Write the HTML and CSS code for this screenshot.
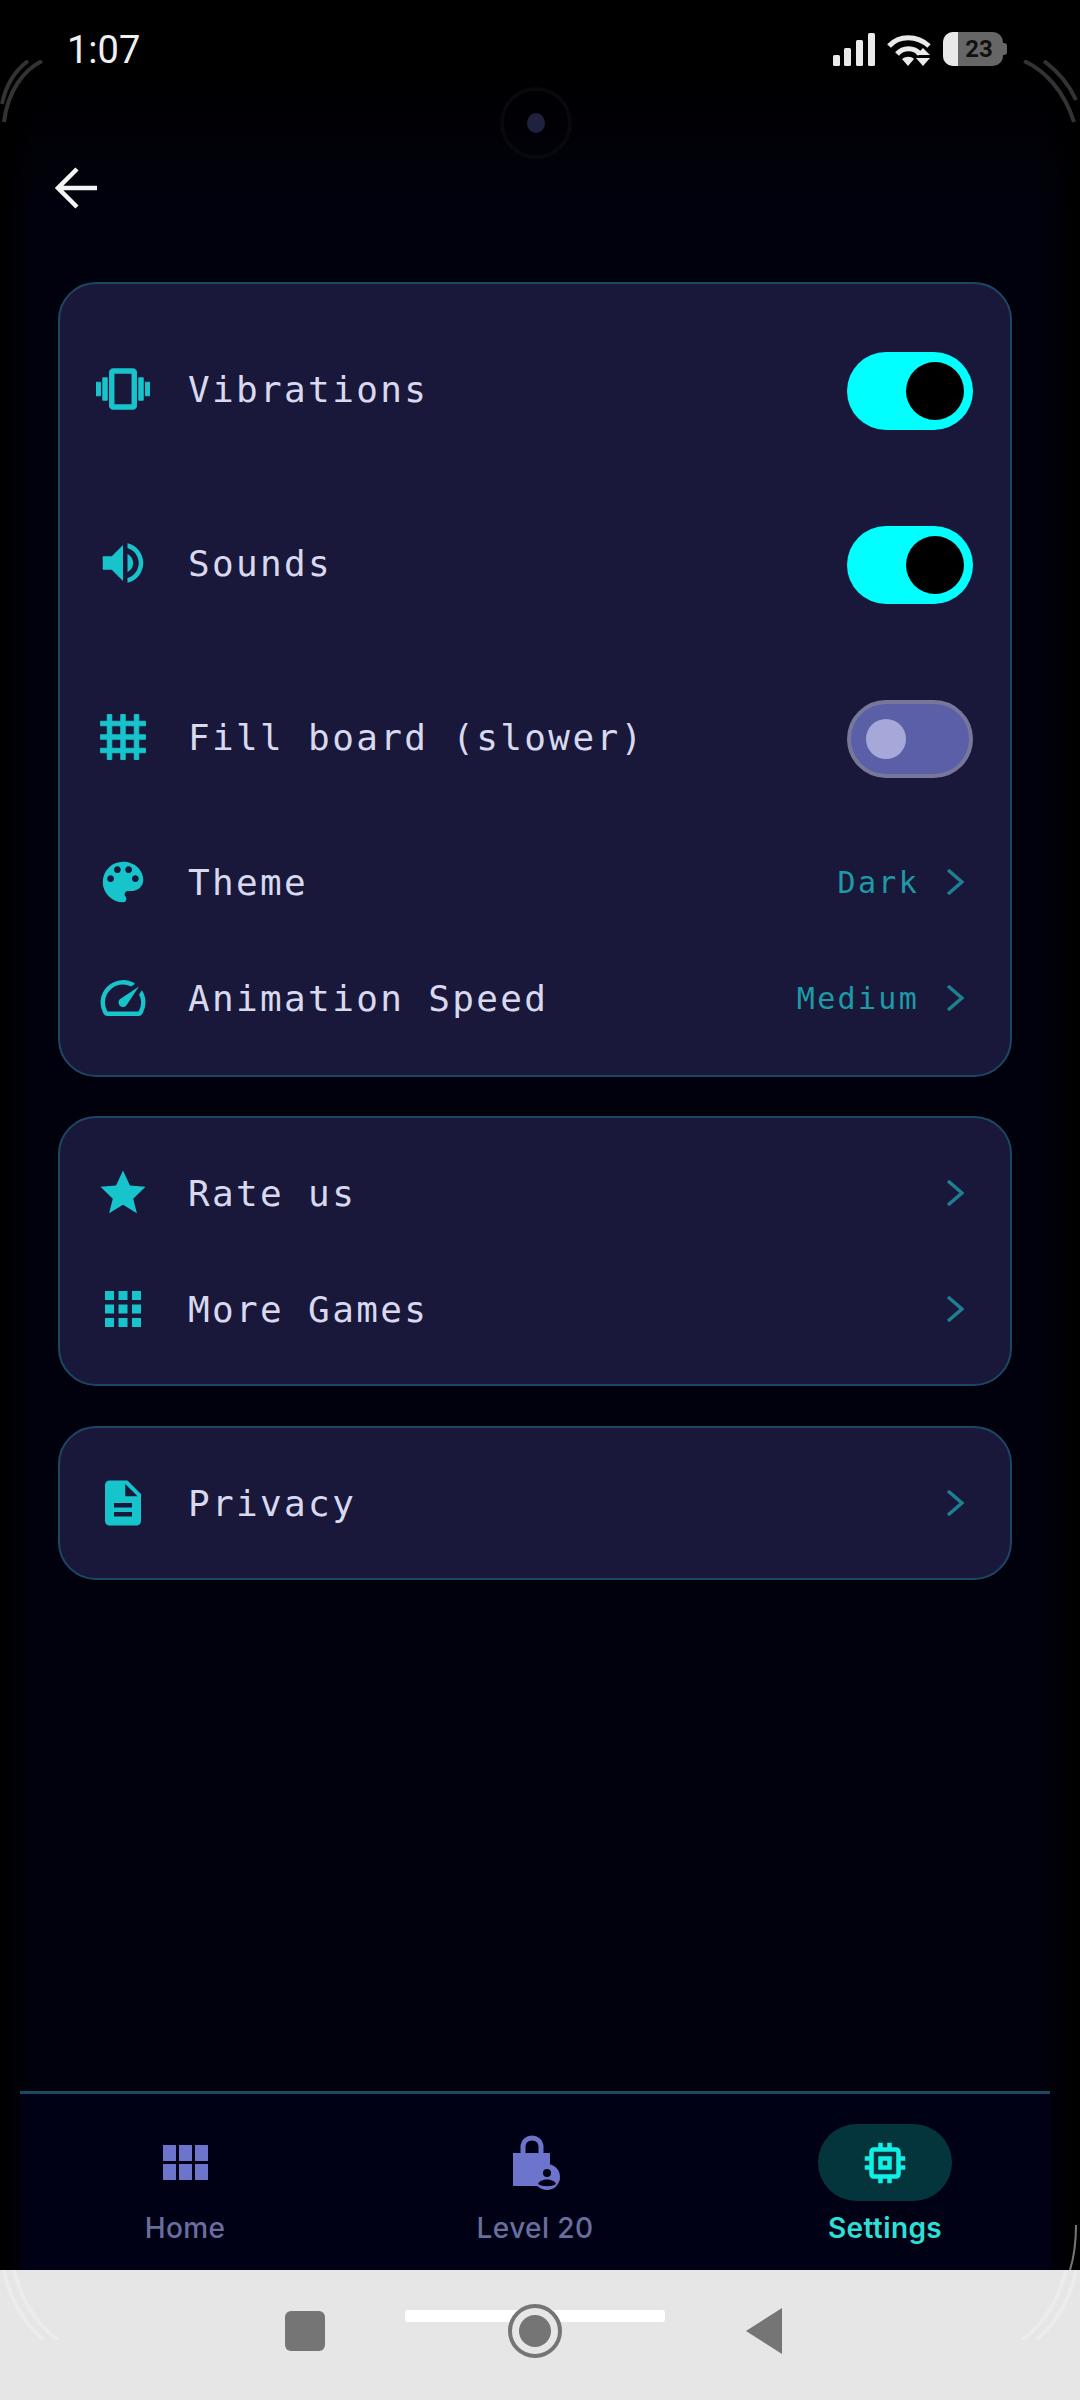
FILE: index.html
```html
<!doctype html>
<html lang="en">
<head>
    <meta charset="utf-8">
    <meta name="viewport" content="width=device-width, initial-scale=1">
    <title>Settings</title>
    <link rel="stylesheet" href="styles.css">
</head>
<body>
<div class="screen">
    <div class="status-bar">
        <span class="time">1:07</span>
        <div class="status-icons">
            <svg class="signal" viewBox="0 0 42 33"><rect x="0" y="22" width="7" height="11" rx="1.5"/><rect x="11" y="15" width="7" height="18" rx="1.5"/><rect x="23" y="7" width="7" height="26" rx="1.5"/><rect x="35" y="0" width="7" height="33" rx="1.5"/></svg>
            <svg class="wifi" viewBox="0 0 44 33">
                <path class="wifi-arc" d="M2 13 C12 2 30 2 42 13"/>
                <path class="wifi-arc" d="M10 21 C16 14 27 14 33 21"/>
                <path d="M15 26 C19 23 24 23 27 26 L21 33 Z"/>
                <path d="M36 15 L43 22 H29 Z M29 25 H43 L36 33 Z"/>
            </svg>
            <div class="battery"><span class="battery-fill"></span><span class="battery-num">23</span></div>
        </div>
    </div>

    <div class="header">
        <svg class="back" viewBox="0 0 44 42"><path d="M42 21 H4 M22 2 L3 21 L22 40"/></svg>
    </div>

    <div class="cards">
        <div class="card">
            <div class="row row-tall">
                <svg class="icon icon-heavy" viewBox="0 0 24 24"><path d="M0 15h2V9H0v6zm3 2h2V7H3v10zm19-8v6h2V9h-2zm-3 8h2V7h-2v10zM16.5 3h-9C6.67 3 6 3.67 6 4.5v15c0 .83.67 1.5 1.5 1.5h9c.83 0 1.5-.67 1.5-1.5v-15c0-.83-.67-1.5-1.5-1.5zM16 19H8V5h8v14z"/></svg>
                <span class="label">Vibrations</span>
                <span class="switch switch-on"><span class="knob"></span></span>
            </div>
            <div class="row row-tall">
                <svg class="icon" viewBox="0 0 24 24"><path d="M3 9v6h4l5 5V4L7 9H3zm13.5 3c0-1.77-1.02-3.29-2.5-4.03v8.05c1.48-.73 2.5-2.25 2.5-4.02zM14 3.23v2.06c2.89.86 5 3.54 5 6.71s-2.11 5.85-5 6.71v2.06c4.01-.91 7-4.49 7-8.77s-2.99-7.86-7-8.77z"/></svg>
                <span class="label">Sounds</span>
                <span class="switch switch-on"><span class="knob"></span></span>
            </div>
            <div class="row row-tall">
                <svg class="icon icon-heavy" viewBox="0 0 24 24"><path d="M22 7V5h-3V2h-2v3h-4V2h-2v3H7V2H5v3H2v2h3v4H2v2h3v4H2v2h3v3h2v-3h4v3h2v-3h4v3h2v-3h3v-2h-3v-4h3v-2h-3V7h3zM7 7h4v4H7V7zm0 10v-4h4v4H7zm10 0h-4v-4h4v4zm0-6h-4V7h4v4z"/></svg>
                <span class="label">Fill board (slower)</span>
                <span class="switch switch-off"><span class="knob"></span></span>
            </div>
            <div class="row">
                <svg class="icon" viewBox="0 0 24 24"><path d="M12 3a9 9 0 0 0 0 18c.83 0 1.5-.67 1.5-1.5 0-.39-.15-.74-.39-1.01-.23-.26-.38-.61-.38-.99 0-.83.67-1.5 1.5-1.5H16c2.76 0 5-2.24 5-5 0-4.42-4.03-8-9-8zm-5.5 9c-.83 0-1.5-.67-1.5-1.5S5.67 9 6.5 9 8 9.67 8 10.5 7.33 12 6.5 12zm3-4C8.67 8 8 7.33 8 6.5S8.67 5 9.5 5s1.5.67 1.5 1.5S10.33 8 9.5 8zm5 0c-.83 0-1.5-.67-1.5-1.5S13.67 5 14.5 5s1.5.67 1.5 1.5S15.33 8 14.5 8zm3 4c-.83 0-1.5-.67-1.5-1.5S16.67 9 17.5 9s1.5.67 1.5 1.5-.67 1.5-1.5 1.5z"/></svg>
                <span class="label">Theme</span>
                <span class="value">Dark</span>
                <svg class="chevron" viewBox="0 0 18 26"><path d="M2 1 L16 13 L2 25"/></svg>
            </div>
            <div class="row">
                <svg class="icon" viewBox="0 0 24 24"><path d="M20.38 8.57l-1.23 1.85a8 8 0 0 1-.22 7.58H5.07A8 8 0 0 1 15.58 6.85l1.85-1.23A10 10 0 0 0 3.35 19a2 2 0 0 0 1.72 1h13.85a2 2 0 0 0 1.74-1 10 10 0 0 0-.27-10.44zM10.59 15.41a2 2 0 0 0 2.83 0l5.66-8.49-8.49 5.66a2 2 0 0 0 0 2.83z"/></svg>
                <span class="label">Animation Speed</span>
                <span class="value">Medium</span>
                <svg class="chevron" viewBox="0 0 18 26"><path d="M2 1 L16 13 L2 25"/></svg>
            </div>
        </div>

        <div class="card">
            <div class="row">
                <svg class="icon" viewBox="0 0 24 24"><path d="M12 17.27L18.18 21l-1.64-6.47L22 9.24l-6.91-.59L12 2 8.91 8.65 2 9.24l5.46 5.29L5.82 21z"/></svg>
                <span class="label">Rate us</span>
                <svg class="chevron" viewBox="0 0 18 26"><path d="M2 1 L16 13 L2 25"/></svg>
            </div>
            <div class="row">
                <svg class="icon" viewBox="0 0 24 24"><path d="M4 8h4V4H4v4zm6 12h4v-4h-4v4zm-6 0h4v-4H4v4zm0-6h4v-4H4v4zm6 0h4v-4h-4v4zm6-10v4h4V4h-4zm-6 4h4V4h-4v4zm6 6h4v-4h-4v4zm0 6h4v-4h-4v4z"/></svg>
                <span class="label">More Games</span>
                <svg class="chevron" viewBox="0 0 18 26"><path d="M2 1 L16 13 L2 25"/></svg>
            </div>
        </div>

        <div class="card">
            <div class="row">
                <svg class="icon" viewBox="0 0 24 24"><path d="M14 2H6c-1.1 0-1.99.9-1.99 2L4 20c0 1.1.89 2 1.99 2H18c1.1 0 2-.9 2-2V8l-6-6zm2 16H8v-2h8v2zm0-4H8v-2h8v2zm-3-5V3.5L18.5 9H13z"/></svg>
                <span class="label">Privacy</span>
                <svg class="chevron" viewBox="0 0 18 26"><path d="M2 1 L16 13 L2 25"/></svg>
            </div>
        </div>
    </div>

    <div class="tabs">
        <div class="tab">
            <div class="tab-icon">
                <svg class="grid-icon" viewBox="0 0 45 35"><rect width="13" height="16"/><rect x="16" width="13" height="16"/><rect x="32" width="13" height="16"/><rect y="19" width="13" height="16"/><rect x="16" y="19" width="13" height="16"/><rect x="32" y="19" width="13" height="16"/></svg>
            </div>
            <span class="tab-label">Home</span>
        </div>
        <div class="tab">
            <div class="tab-icon">
                <svg class="lock-icon" viewBox="0 0 48 56">
                    <path class="shackle" d="M10 20 V12 C10 0 28 0 28 12 V20"/>
                    <path d="M0 18 H37 V30 C28 32 24 42 27 51 H0 Z"/>
                    <circle cx="34" cy="42" r="13"/>
                    <circle class="badge-head" cx="34" cy="38" r="4"/>
                    <path class="badge-head" d="M25 49 C27 43 41 43 43 49 C39 52 29 52 25 49 Z"/>
                </svg>
            </div>
            <span class="tab-label">Level 20</span>
        </div>
        <div class="tab tab-active">
            <div class="tab-icon">
                <svg class="chip-icon" viewBox="0 0 24 24"><path d="M15 9H9v6h6V9zm-2 4h-2v-2h2v2zm8-2V9h-2V7c0-1.1-.9-2-2-2h-2V3h-2v2h-2V3H9v2H7c-1.1 0-2 .9-2 2v2H3v2h2v2H3v2h2v2c0 1.1.9 2 2 2h2v2h2v-2h2v2h2v-2h2c1.1 0 2-.9 2-2v-2h2v-2h-2v-2h2zm-4 6H7V7h10v10z"/></svg>
            </div>
            <span class="tab-label">Settings</span>
        </div>
    </div>

    <div class="system-nav">
        <span class="sys-pill"></span>
        <span class="sys-square"></span>
        <span class="sys-circle"><span class="sys-dot"></span></span>
        <svg class="sys-back" viewBox="0 0 36 46"><path d="M36 0 V46 L0 23 Z"/></svg>
    </div>

    <!-- bits of the wallpaper and camera that show through the screen -->
    <span class="camera"><span class="camera-lens"></span></span>
    <svg class="corner corner-left" viewBox="0 0 50 64"><path d="M42 1 C24 10 8 30 4 62"/><path d="M28 1 C16 10 6 24 2 44"/></svg>
    <svg class="corner corner-right" viewBox="0 0 58 64"><path d="M4 1 C24 10 44 30 54 62"/><path d="M24 1 C36 10 48 22 56 40"/></svg>
    <svg class="corner-low corner-low-left" viewBox="0 0 60 70"><path d="M4 0 C8 26 24 54 44 70"/><path d="M14 0 C20 28 36 54 58 70"/></svg>
    <svg class="corner-low corner-low-right" viewBox="0 0 60 70"><path d="M56 0 C52 26 36 54 16 70"/><path d="M46 0 C40 28 24 54 2 70"/></svg>
    <svg class="corner-edge" viewBox="0 0 10 45"><path d="M8 0 C8 16 6 32 2 45"/></svg>
</div>
</body>
</html>
```

FILE: styles.css
```css
* {
    box-sizing: border-box;
}

body {
    margin: 0;
    background: #000;
}

.screen {
    position: relative;
    width: 1080px;
    height: 2400px;
    display: flex;
    flex-direction: column;
    overflow: hidden;
    background:
        linear-gradient(#000 60px, rgba(0, 0, 0, 0) 220px),
        linear-gradient(90deg, #000 0, #01010e 40px, #01010e 1040px, #000 1080px);
}

/* status bar */
.status-bar {
    height: 100px;
    padding: 28px 77px 0 67px;
    display: flex;
    justify-content: space-between;
    align-items: flex-start;
}

.time {
    font-family: Roboto, sans-serif;
    font-size: 38px;
    line-height: 44px;
    color: #f0f0f0;
}

.status-icons {
    display: flex;
    align-items: flex-start;
    gap: 12px;
    padding-top: 5px;
}

.signal {
    width: 42px;
    height: 33px;
    fill: #eaeaea;
}

.wifi {
    width: 44px;
    height: 33px;
    fill: #eaeaea;
}

.wifi-arc {
    fill: none;
    stroke: #eaeaea;
    stroke-width: 5;
}

.battery {
    position: relative;
    width: 60px;
    height: 34px;
    margin-top: -1px;
    background: #666;
    border-radius: 10px;
    text-align: center;
}

.battery::after {
    content: "";
    position: absolute;
    right: -4px;
    top: 11px;
    width: 4px;
    height: 12px;
    background: #666;
    border-radius: 0 3px 3px 0;
}

.battery-fill {
    position: absolute;
    left: 0;
    top: 0;
    bottom: 0;
    width: 15px;
    background: #e8e8e8;
    border-radius: 10px 0 0 10px;
}

.battery-num {
    position: relative;
    left: 6px;
    font-family: Roboto, sans-serif;
    font-size: 24px;
    font-weight: 700;
    line-height: 34px;
    color: #111;
}

/* header */
.header {
    height: 182px;
    padding: 67px 0 0 55px;
}

.back {
    display: block;
    width: 44px;
    height: 42px;
    fill: none;
    stroke: #f4f4f4;
    stroke-width: 4.5;
}

/* setting cards */
.cards {
    flex: 1;
    padding: 0 68px 0 58px;
    display: flex;
    flex-direction: column;
    gap: 40px;
}

.card {
    padding: 17px 37px 17px 36px;
    background: #19183a;
    border: 2px solid #1c4763;
    border-radius: 38px;
}

.cards .card:first-child {
    padding-top: 18px;
    padding-bottom: 19px;
    margin-bottom: -1px;
}

.row {
    height: 116px;
    display: flex;
    align-items: center;
}

.row-tall {
    height: 174px;
}

.icon {
    flex: none;
    width: 54px;
    height: 54px;
    fill: #18c4cc;
}

.icon-heavy {
    stroke: #18c4cc;
    stroke-width: 0.4;
}

.label {
    flex: 1;
    margin-left: 38px;
    font-family: "DejaVu Sans Mono", monospace;
    font-size: 36px;
    letter-spacing: 2.35px;
    color: #d8d8ee;
}

.value {
    margin-right: 27px;
    font-family: "DejaVu Sans Mono", monospace;
    font-size: 30px;
    letter-spacing: 2.3px;
    color: #1e9aa6;
}

.chevron {
    flex: none;
    width: 18px;
    height: 26px;
    margin-right: 9px;
    fill: none;
    stroke: #1d8090;
    stroke-width: 3.5;
}

/* switches */
.switch {
    flex: none;
    width: 126px;
    height: 78px;
    margin-top: 3px;
    display: flex;
    align-items: center;
    border-radius: 39px;
}

.switch-on {
    justify-content: flex-end;
    padding-right: 9px;
    background: #00ffff;
}

.switch-on .knob {
    width: 58px;
    height: 58px;
    background: #000;
    border-radius: 50%;
}

.switch-off {
    padding-left: 15px;
    background: #5a5fa8;
    border: 4px solid #77779a;
}

.switch-off .knob {
    width: 40px;
    height: 40px;
    background: #a5a8d8;
    border-radius: 50%;
}

/* bottom tabs */
.tabs {
    height: 179px;
    margin: 0 30px 0 20px;
    padding-top: 30px;
    display: grid;
    grid-template-columns: repeat(3, 350px);
    justify-content: center;
    background: #000115;
    border-top: 3px solid #1b4a60;
}

.tab {
    display: flex;
    flex-direction: column;
    align-items: center;
}

.tab-icon {
    width: 134px;
    height: 77px;
    display: flex;
    align-items: center;
    justify-content: center;
    border-radius: 39px;
}

.tab-label {
    margin-top: 11px;
    font-family: Inter, sans-serif;
    font-size: 28px;
    font-weight: 500;
    letter-spacing: 0.4px;
    line-height: 32px;
    color: #6a6e9e;
}

.grid-icon {
    width: 45px;
    height: 35px;
    fill: #6c74cc;
}

.lock-icon {
    width: 48px;
    height: 56px;
    margin-left: 4px;
    fill: #6c74cc;
}

.shackle {
    fill: none;
    stroke: #6c74cc;
    stroke-width: 5;
}

.badge-head {
    fill: #000115;
}

.chip-icon {
    width: 54px;
    height: 54px;
    fill: #12f0e6;
}

.tab-active .tab-icon {
    background: #04343c;
}

.tab-active .tab-label {
    font-weight: 600;
    color: #2ce0d8;
}

/* android navigation */
.system-nav {
    position: relative;
    height: 130px;
    padding: 34px 12px 0 0;
    display: flex;
    justify-content: center;
    align-items: flex-start;
    gap: 183px;
    background: #e6e6e6;
}

.sys-pill {
    position: absolute;
    left: 405px;
    top: 40px;
    width: 260px;
    height: 12px;
    background: #fff;
    border-radius: 3px;
}

.sys-square {
    width: 40px;
    height: 40px;
    margin-top: 7px;
    background: #757575;
    border-radius: 6px;
}

.sys-circle {
    position: relative;
    width: 54px;
    height: 54px;
    display: flex;
    align-items: center;
    justify-content: center;
    background: #e6e6e6;
    border: 4px solid #757575;
    border-radius: 50%;
}

.sys-dot {
    width: 32px;
    height: 32px;
    background: #757575;
    border-radius: 50%;
}

.sys-back {
    width: 38px;
    height: 46px;
    margin-top: 4px;
    fill: #757575;
}

/* overlays */
.camera {
    position: absolute;
    left: 500px;
    top: 87px;
    width: 72px;
    height: 72px;
    display: flex;
    align-items: center;
    justify-content: center;
    border: 4px solid #08080d;
    border-radius: 50%;
}

.camera-lens {
    width: 18px;
    height: 20px;
    background: #20203f;
    border-radius: 50%;
}

.corner {
    position: absolute;
    top: 60px;
    height: 64px;
    fill: none;
    stroke: #333;
    stroke-width: 4;
}

.corner-left {
    left: 0;
    width: 50px;
}

.corner-right {
    right: 2px;
    width: 58px;
}

.corner-low {
    position: absolute;
    top: 2270px;
    width: 60px;
    height: 70px;
    fill: none;
    stroke: #ececec;
    stroke-width: 4;
}

.corner-low-left {
    left: 0;
}

.corner-low-right {
    right: 0;
}

.corner-edge {
    position: absolute;
    top: 2225px;
    right: 2px;
    width: 10px;
    height: 45px;
    fill: none;
    stroke: #777;
    stroke-width: 2;
}
```
